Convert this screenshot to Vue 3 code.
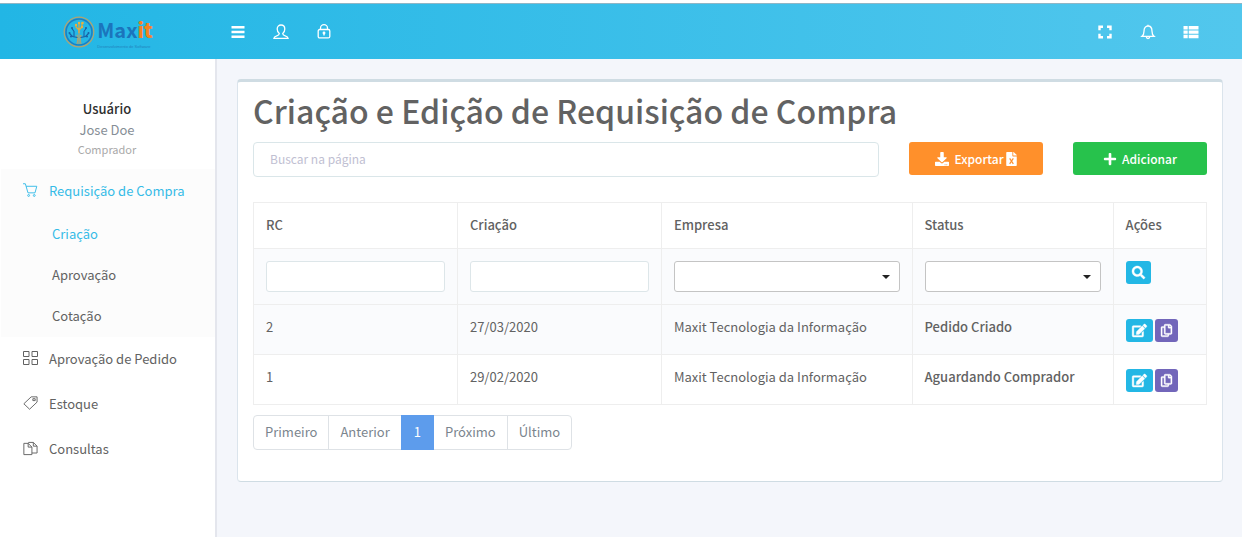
<script setup>
import { ref } from 'vue'

const search = ref('')
const filters = ref({ rc: '', date: '', company: '', status: '' })

const subItems = [
  { label: 'Criação', active: true },
  { label: 'Aprovação', active: false },
  { label: 'Cotação', active: false },
]
const rows = [
  { rc: 2, date: '27/03/2020', company: 'Maxit Tecnologia da Informação', status: 'Pedido Criado' },
  { rc: 1, date: '29/02/2020', company: 'Maxit Tecnologia da Informação', status: 'Aguardando Comprador' },
]
const pages = ['Primeiro', 'Anterior', '1', 'Próximo', 'Último']
</script>

<template>
  <div class="page">
    <header class="topbar">
      <a class="brand" href="#" aria-label="Maxit Desenvolvimento de Software">
        <svg class="brand-mark" viewBox="0 0 32 32" fill="none">
          <circle cx="16" cy="16" r="14.8" stroke="#b3a36f" stroke-width="1.2" />
          <circle cx="16" cy="16" r="13" stroke="#1d7fc4" stroke-width="1.6" />
          <path d="M14 28c1-3 1-6 0-9M18 28c-1-3-1-6 0-9M16 28V12" stroke="#a9a577" stroke-width="1.3" />
          <path d="M16 17V8M16 14l-3-3V8M16 14l3-3V7" stroke="#e5a83b" stroke-width="1.200" />
          <path d="M14.500 21.500l-5-1-3-3M11 20.500v-5l-2-3M17.500 21.500l5-1 3-3M21 20.500v-5l2-3" stroke="#1a5fa4" stroke-width="1.100" />
          <g fill="#1a5fa4"><circle cx="6.500" cy="17" r="1" /><circle cx="9" cy="12" r="1" /><circle cx="25.500" cy="17" r="1" /><circle cx="23" cy="12" r="1" /><circle cx="8" cy="20.500" r="1" /><circle cx="24" cy="20.500" r="1" /></g>
          <g fill="#eeb03a"><circle cx="13" cy="9" r="1.200" /><circle cx="16" cy="7" r="1.200" /><circle cx="19.500" cy="7" r="1.300" /><circle cx="19" cy="11" r="1.200" /></g>
        </svg>
        <span class="brand-text">
          <span class="brand-name">Max<b>it</b></span>
          <span class="brand-tag">Desenvolvimento de Software</span>
        </span>
      </a>
      <nav class="tools">
        <button type="button" aria-label="Menu">
          <svg viewBox="0 0 16 16" fill="#fff"><path d="M1.500 2h13v2.400h-13zM1.500 6.800h13v2.400h-13zM1.500 11.600h13V14h-13z" /></svg>
        </button>
        <button type="button" aria-label="Perfil">
          <svg viewBox="0 0 16 16" fill="none" stroke="#fff" stroke-width="1.300"><path d="M6.300 9.600C4.900 8.500 4.200 6.700 4.200 5c0-2.300 1.500-4 3.800-4s3.800 1.700 3.800 4c0 1.700-.7 3.500-2.100 4.600 0 1.400.8 1.700 2.500 2.200 1.800.5 2.700 1.100 2.900 2.600H.9c.2-1.500 1.100-2.100 2.900-2.600 1.700-.5 2.500-.8 2.500-2.200z" /></svg>
        </button>
        <button type="button" aria-label="Bloquear">
          <svg viewBox="0 0 16 16" fill="none" stroke="#fff" stroke-width="1.300"><rect x="2.200" y="5.500" width="11.600" height="8.400" rx="1.500" /><path d="M4.500 5.500V4.200a3.500 3.500 0 0 1 7 0v1.300M8 9v2.500" /><circle cx="8" cy="9" r=".8" fill="#fff" /></svg>
        </button>
      </nav>
      <nav class="tools tools-right">
        <button type="button" aria-label="Tela cheia">
          <svg viewBox="0 0 16 16" fill="none" stroke="#fff" stroke-width="2.400"><path d="M6 2.700H2.500v3.500M10 2.700h3.500v3.500M6 13.300H2.500V9.800M10 13.300h3.500V9.800" /></svg>
        </button>
        <button type="button" aria-label="Notificações">
          <svg viewBox="0 0 16 16" fill="none" stroke="#fff" stroke-width="1.300"><path d="M8 .8v1.100M2 12.300c1.500-1.200 2-2.300 2-5.100 0-3.200 1.600-5.200 4-5.200s4 2 4 5.200c0 2.800.5 3.900 2 5.100zM6.200 12.500c.2 1.400.9 2 1.800 2s1.600-.6 1.800-2" /></svg>
        </button>
        <button type="button" aria-label="Lista">
          <svg viewBox="0 0 16 16" fill="#fff"><path d="M.5 2h4.200v3.600H.5zM5.700 2h9.800v3.600H5.700zM.5 6.500h4.200v3.300H.5zM5.700 6.500h9.800v3.300H5.700zM.5 10.700h4.200v3.600H.5zM5.700 10.700h9.800v3.600H5.700z" /></svg>
        </button>
      </nav>
    </header>

    <div class="body">
      <aside class="sidebar">
        <div class="user">
          <strong>Usuário</strong>
          <span>Jose Doe</span>
          <small>Comprador</small>
        </div>
        <nav class="menu">
          <div class="group">
            <a class="item active" href="#">
              <svg viewBox="0 0 16 16" fill="none" stroke="currentColor"><path d="M0 .8h2.500l2.800 9.700h7.500l1.900-7H3.300" /><circle cx="6" cy="13.300" r="1" /><circle cx="12" cy="13.300" r="1" /></svg>
              Requisição de Compra
            </a>
            <a v-for="s in subItems" :key="s.label" class="sub" :class="{ active: s.active }" href="#">{{ s.label }}</a>
          </div>
          <a class="item" href="#">
            <svg viewBox="0 0 15 15" fill="none" stroke="currentColor"><path d="M.5 .5h5.500v5H.5zM9 .5h5.500v5H9zM.5 8.500h5.500v5H.5zM9 8.500h5.500v5H9z" /></svg>
            Aprovação de Pedido
          </a>
          <a class="item" href="#">
            <svg viewBox="0 0 16 16" fill="none" stroke="currentColor"><path d="M8.700 .9H15v5.600L7 14.100.9 8.300z" /><path d="M10.500 2.900H13v2h-2.500z" /></svg>
            Estoque
          </a>
          <a class="item" href="#">
            <svg viewBox="0 0 16 16" fill="none" stroke="currentColor"><path d="M9.500 14.500H.9v-12h4.600l4 4zM5.500 2.500v4h4M6 2.500v-1h5l4 4v7.300H9.500M11 1.500v4h4" /></svg>
            Consultas
          </a>
        </nav>
      </aside>

      <main class="content">
        <section class="card">
          <h1>Criação e Edição de Requisição de Compra</h1>
          <div class="actions">
            <input v-model="search" class="search" type="text" placeholder="Buscar na página" aria-label="Buscar na página" />
            <button type="button" class="btn export">
              <svg class="i14" viewBox="0 0 512 512"><path d="M216 0h80c13.300 0 24 10.700 24 24v168h87.700c17.800 0 26.700 21.500 14.100 34.100L269.700 378.300c-7.500 7.500-19.800 7.500-27.300 0L90.100 226.100c-12.600-12.600-3.700-34.100 14.100-34.100H192V24c0-13.300 10.700-24 24-24zm296 376v112c0 13.300-10.700 24-24 24H24c-13.300 0-24-10.700-24-24V376c0-13.300 10.700-24 24-24h146.700l49 49c20.100 20.100 52.500 20.100 72.600 0l49-49H488c13.300 0 24 10.700 24 24zm-124 88c0-11-9-20-20-20s-20 9-20 20 9 20 20 20 20-9 20-20zm64 0c0-11-9-20-20-20s-20 9-20 20 9 20 20 20 20-9 20-20z" /></svg>
              <span class="export-label">Exportar
                <svg class="file" viewBox="0 0 384 512"><path d="M224 136V0H24C10.700 0 0 10.700 0 24v464c0 13.300 10.700 24 24 24h336c13.300 0 24-10.700 24-24V160H248c-13.200 0-24-10.800-24-24zm160-14.100v6.100H256V0h6.100c6.400 0 12.500 2.500 17 7l97.900 98c4.500 4.500 7 10.600 7 16.900z" /><path class="cross" d="M125 235l134 200M259 235L125 435" /></svg>
              </span>
            </button>
            <button type="button" class="btn add">
              <svg class="i14" viewBox="0 0 448 512"><path d="M416 208H272V64c0-17.670-14.330-32-32-32h-32c-17.670 0-32 14.330-32 32v144H32c-17.670 0-32 14.330-32 32v32c0 17.670 14.330 32 32 32h144v144c0 17.670 14.330 32 32 32h32c17.670 0 32-14.330 32-32V304h144c17.670 0 32-14.330 32-32v-32c0-17.670-14.330-32-32-32z" /></svg>
              Adicionar
            </button>
          </div>

          <table>
            <colgroup><col class="c1" /><col class="c1" /><col class="c3" /><col class="c4" /><col class="c5" /></colgroup>
            <thead>
              <tr><th>RC</th><th>Criação</th><th>Empresa</th><th>Status</th><th>Ações</th></tr>
            </thead>
            <tbody>
              <tr class="filters shade">
                <td><input v-model="filters.rc" type="text" aria-label="RC" /></td>
                <td><input v-model="filters.date" type="text" aria-label="Criação" /></td>
                <td>
                  <div class="select">
                    <select v-model="filters.company" aria-label="Empresa"><option value=""></option><option>Maxit Tecnologia da Informação</option></select>
                    <svg viewBox="0 0 8 4"><path d="M0 0h8L4 4z" /></svg>
                  </div>
                </td>
                <td>
                  <div class="select">
                    <select v-model="filters.status" aria-label="Status"><option value=""></option><option>Pedido Criado</option><option>Aguardando Comprador</option></select>
                    <svg viewBox="0 0 8 4"><path d="M0 0h8L4 4z" /></svg>
                  </div>
                </td>
                <td>
                  <button type="button" class="mini blue" aria-label="Pesquisar">
                    <svg class="i13" viewBox="0 0 512 512"><path d="M505 442.700L405.300 343c-4.500-4.500-10.600-7-17-7H372c27.600-35.300 44-79.700 44-128C416 93.100 322.900 0 208 0S0 93.100 0 208s93.100 208 208 208c48.300 0 92.700-16.400 128-44v16.300c0 6.400 2.500 12.500 7 17l99.700 99.700c9.400 9.400 24.600 9.400 33.900 0l28.300-28.300c9.400-9.400 9.400-24.600.1-34zM208 336c-70.700 0-128-57.200-128-128 0-70.700 57.200-128 128-128 70.700 0 128 57.200 128 128 0 70.700-57.200 128-128 128z" /></svg>
                  </button>
                </td>
              </tr>
              <tr v-for="(r, i) in rows" :key="r.rc" class="data" :class="{ shade: i === 0 }">
                <td>{{ r.rc }}</td>
                <td>{{ r.date }}</td>
                <td>{{ r.company }}</td>
                <td class="status">{{ r.status }}</td>
                <td>
                  <div class="row-actions">
                    <button type="button" class="mini blue" aria-label="Editar">
                      <svg class="i15" viewBox="0 0 576 512"><path d="M402.600 83.200l90.200 90.200c3.800 3.800 3.800 10 0 13.800L274.400 405.600l-92.800 10.300c-12.400 1.400-22.900-9.100-21.500-21.500l10.300-92.800L388.800 83.200c3.800-3.800 10-3.800 13.800 0zm162-22.900l-48.800-48.800c-15.200-15.200-39.900-15.200-55.200 0l-35.400 35.400c-3.800 3.800-3.800 10 0 13.800l90.200 90.200c3.800 3.800 10 3.800 13.800 0l35.400-35.400c15.200-15.300 15.200-40 0-55.200zM384 346.200V448H64V128h229.800c3.200 0 6.200-1.300 8.500-3.500l40-40c7.600-7.600 2.200-20.500-8.500-20.500H48C21.500 64 0 85.500 0 112v352c0 26.500 21.500 48 48 48h352c26.500 0 48-21.500 48-48V306.200c0-10.700-12.900-16-20.500-8.500l-40 40c-2.200 2.300-3.500 5.300-3.500 8.500z" /></svg>
                    </button>
                    <button type="button" class="mini purple" aria-label="Copiar">
                      <svg class="i11" viewBox="0 0 448 512"><path d="M433.941 65.941l-51.882-51.882A48 48 0 0 0 348.118 0H176c-26.510 0-48 21.490-48 48v48H48c-26.510 0-48 21.490-48 48v320c0 26.510 21.490 48 48 48h224c26.510 0 48-21.490 48-48v-48h80c26.510 0 48-21.490 48-48V99.882a48 48 0 0 0-14.059-33.941zM266 464H54a6 6 0 0 1-6-6V150a6 6 0 0 1 6-6h74v224c0 26.510 21.490 48 48 48h96v42a6 6 0 0 1-6 6zm128-96H182a6 6 0 0 1-6-6V54a6 6 0 0 1 6-6h106v88c0 13.255 10.745 24 24 24h88v202a6 6 0 0 1-6 6zm6-256h-64V48h9.632c1.591 0 3.117.632 4.243 1.757l48.368 48.368a6 6 0 0 1 1.757 4.243V112z" /></svg>
                    </button>
                  </div>
                </td>
              </tr>
            </tbody>
          </table>

          <nav class="pagination" aria-label="Paginação">
            <a v-for="p in pages" :key="p" href="#" :class="{ current: p === '1' }">{{ p }}</a>
          </nav>
        </section>
      </main>
    </div>
  </div>
</template>

<style>
body {
  margin: 0;
  background: #f4f6fb;
}
</style>

<style scoped>
* {
  box-sizing: border-box;
}
.page {
  min-height: 100vh;
  display: flex;
  flex-direction: column;
  border-top: 3px solid #fff;
  color: #626262;
  font-family: "Noto Sans CJK SC", "Noto Sans", sans-serif;
  font-size: 13px;
  line-height: 20px;
}
a {
  color: inherit;
  text-decoration: none;
}
button,
input,
select {
  font: inherit;
  color: inherit;
}
button {
  border: 0;
  padding: 0;
  cursor: pointer;
}
svg {
  display: block;
  flex: none;
}

.topbar {
  display: flex;
  align-items: center;
  height: 56px;
  border-top: 1px solid #8fb6c6;
  background: linear-gradient(90deg, #22b6e5, #52c7ed);
}
.brand {
  width: 216px;
  display: flex;
  align-items: center;
  justify-content: center;
  gap: 2px;
}
.brand-mark {
  width: 32px;
  height: 32px;
}
.brand-text {
  display: flex;
  flex-direction: column;
}
.brand-name {
  color: #1b75bc;
  font-size: 20px;
  font-weight: 700;
  line-height: 29px;
}
.brand-name b {
  color: #f58220;
}
.brand-tag {
  color: #2383bd;
  font-family: "Liberation Sans", sans-serif;
  font-size: 4px;
  line-height: 5px;
}
.tools {
  display: flex;
  gap: 27px;
  padding-left: 14px;
}
.tools-right {
  margin-left: auto;
  padding: 0 43px 0 0;
}
.tools button {
  background: none;
}
.tools svg {
  width: 16px;
  height: 16px;
}

.body {
  flex: 1;
  display: flex;
}
.sidebar {
  width: 217px;
  flex: none;
  border-right: 2px solid #e4e6ed;
  background: #fff;
}
.user {
  display: flex;
  flex-direction: column;
  align-items: center;
  padding: 39px 1px 10px 0;
}
.user strong {
  color: #2e2e2e;
  font-weight: 500;
  line-height: 21px;
}
.user span {
  color: #868e96;
  line-height: 21px;
}
.user small {
  color: #a9a9a9;
  font-size: 11px;
  line-height: 19px;
}
.group {
  margin-left: 1px;
  background: #fcfcfc;
}
.group .item {
  padding-left: 22px;
}
.item {
  display: flex;
  align-items: center;
  gap: 11px;
  height: 45px;
  padding: 0 0 2px 23px;
}
.item svg {
  width: 15px;
  height: 15px;
}
.sub {
  display: block;
  padding: 0 0 2px 51px;
  line-height: 39px;
}
.menu .active {
  color: #35bbe7;
}

.content {
  flex: 1;
  min-width: 0;
  padding: 20px 19px 20px 20px;
}
.card {
  border: 1px solid #dbe4ec;
  border-top: 3px solid #cfdce3;
  border-bottom-color: #cfdce3;
  border-radius: 4px;
  padding: 8px 15px 31px;
  background: #fff;
}
h1 {
  margin: 0;
  font-size: 32px;
  font-weight: 500;
  line-height: 40px;
}
.actions {
  display: grid;
  grid-template-columns: repeat(12, minmax(0, 1fr));
  column-gap: 30px;
  align-items: start;
  margin-top: 12px;
}
.search {
  grid-column: span 8;
  height: 35px;
  padding: 0 16px 2px;
  border: 1px solid #dae6e9;
  border-radius: 4px;
  outline: 0;
  font-size: 12px;
}
.search::placeholder {
  color: #bfc0d2;
  opacity: 1;
}
.btn {
  grid-column: span 2;
  display: flex;
  align-items: center;
  justify-content: center;
  gap: 5px;
  height: 33px;
  border-radius: 3px;
  color: #fff;
  font-weight: 500;
  font-size: 12px;
}
.btn svg,
.mini svg {
  fill: #fff;
}
.export {
  background: #ff902b;
}
.export-label {
  display: flex;
  align-items: center;
  gap: 2px;
}
.export .cross {
  fill: none;
  stroke: #ff902b;
  stroke-width: 44;
}
.add {
  background: #27c24c;
}
.i14 {
  width: 14px;
  height: 14px;
}
.file {
  width: 11px;
  height: 14px;
}

table {
  width: 100%;
  margin-top: 25px;
  table-layout: fixed;
  border-collapse: collapse;
}
.c1 {
  width: 21.4%;
}
.c3 {
  width: 26.3%;
}
.c4 {
  width: 21.1%;
}
.c5 {
  width: 9.8%;
}
th,
td {
  padding: 12px;
  border: 1px solid #eee;
  text-align: left;
  vertical-align: top;
}
th {
  height: 46px;
  font-weight: 500;
}
.shade {
  background: #fafbfd;
}
.filters td {
  height: 56px;
}
.data td {
  height: 50px;
}
.data .status {
  font-weight: 500;
}
.filters input,
select {
  display: block;
  width: 100%;
  height: 31px;
  padding: 0 8px;
  border: 1px solid #dde6e9;
  border-radius: 3px;
  background: #fff;
  outline: 0;
}
.select {
  display: grid;
  align-items: center;
}
.select > * {
  grid-area: 1 / 1;
}
select {
  appearance: none;
  border-color: #c4c4c4;
}
.select svg {
  width: 8px;
  height: 4px;
  margin-right: 10px;
  justify-self: end;
  fill: #222;
  pointer-events: none;
}
.mini {
  display: flex;
  align-items: center;
  justify-content: center;
  height: 23px;
  padding: 0 6px;
  border-radius: 3px;
}
.mini path {
  stroke: #fff;
  stroke-width: 16;
}
.blue {
  background: #23b7e5;
}
.purple {
  background: #7266ba;
}
.row-actions {
  display: flex;
  gap: 2px;
  padding-top: 2px;
}
.i11 {
  width: 11px;
  height: 13px;
  overflow: visible;
}
.i13 {
  width: 13px;
  height: 13px;
  overflow: visible;
}
.i15 {
  width: 15px;
  height: 13px;
  overflow: visible;
}

.pagination {
  display: flex;
  margin-top: 10px;
  color: #7b858e;
}
.pagination a {
  padding: 0 11px 2px;
  border: 1px solid #dee2e6;
  line-height: 31px;
}
.pagination a + a {
  margin-left: -1px;
}
.pagination a:first-child {
  border-radius: 4px 0 0 4px;
}
.pagination a:last-child {
  border-radius: 0 4px 4px 0;
}
.pagination .current {
  padding: 0 12px 2px;
  border-color: #5d9cec;
  background: #5d9cec;
  color: #fff;
  z-index: 1;
}
</style>
